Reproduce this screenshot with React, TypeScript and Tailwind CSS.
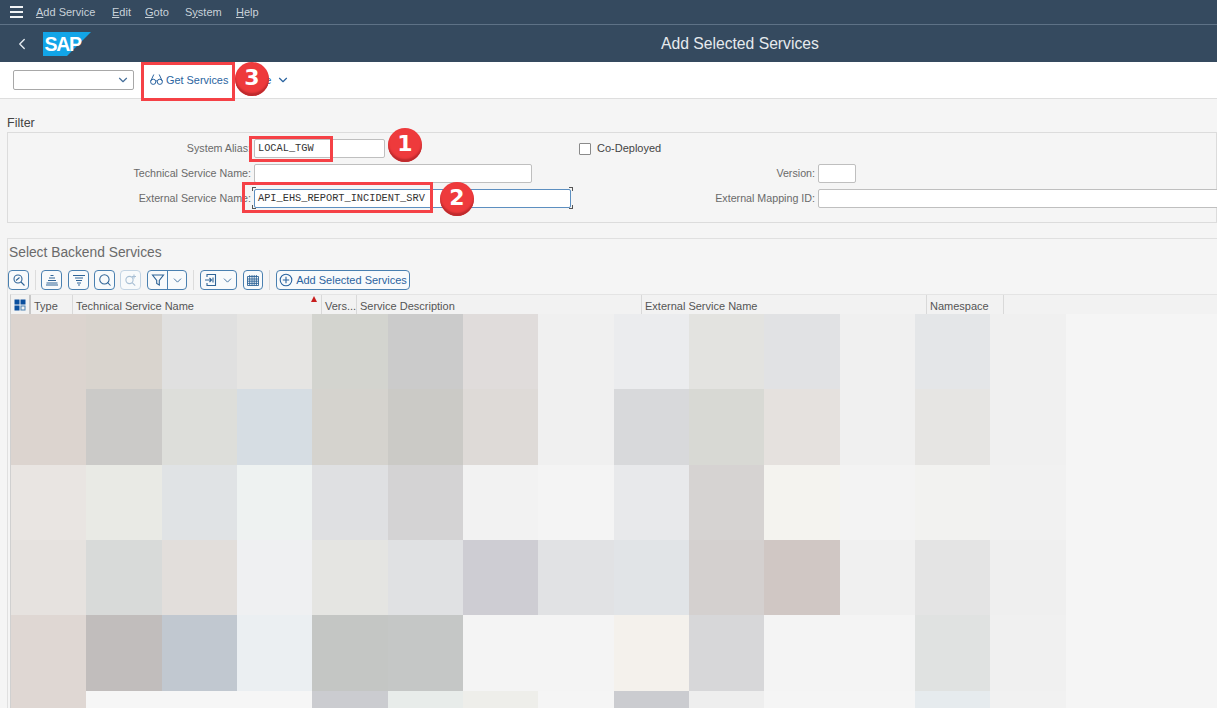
import React from "react";
import { ChevronDown, ChevronLeft, Search } from "lucide-react";

const mosaic = [
  ["#dcd4cf", "#d9d4ce", "#e0e0e0", "#e6e5e3", "#d3d4cf", "#cbcbcb", "#e0dcdb", "#f0f0f0", "#ebecee", "#e3e3e0", "#e1e2e4", "#f0f0f0", "#e4e6e8", "#f0f0f0"],
  ["#dcd4cf", "#cbcac8", "#dddeda", "#d6dde3", "#d5d3ce", "#cbcac6", "#dedad7", "#f0f0f0", "#d8d9db", "#d8d9d4", "#e5e1de", "#f0f0f0", "#e6e5e3", "#f0f0f0"],
  ["#e9e5e2", "#e9eae5", "#e0e3e5", "#eef2f1", "#dfe0e2", "#d4d3d4", "#f2f2f2", "#f4f4f4", "#e8e9eb", "#d6d3d2", "#f4f3ef", "#f3f3f3", "#f2f2f0", "#f1f1f1"],
  ["#e6e2df", "#d8dad9", "#e2dedb", "#eff0f2", "#e5e5e2", "#e0e1e3", "#cecdd3", "#e1e2e4", "#e1e4e7", "#d4d0cf", "#d0c7c4", "#f0f0f0", "#e4e4e4", "#efefef"],
  ["#dfd7d3", "#c1bdbc", "#c1c8d0", "#ebeff2", "#c4c6c4", "#c5c7c6", "#f4f4f4", "#f4f4f4", "#f4f1ec", "#d7d7d9", "#f4f4f4", "#f4f4f4", "#e0e2e1", "#f0f0f0"],
  ["#dfd7d3", "#f6f6f6", "#f6f6f6", "#f6f6f6", "#cbccd0", "#e8ecea", "#eeeeea", "#f5f5f5", "#cbccd0", "#eeeeee", "#f5f5f5", "#f5f5f5", "#e6ebee", "#f1f1f1"],
];

const ICON = "#2f6497";

function Menu({ before = "", u, after }: { before?: string; u: string; after: string }) {
  return (
    <span>
      {before}
      <span className="underline">{u}</span>
      {after}
    </span>
  );
}

function Input({ w, value, focus }: { w: string; value?: string; focus?: boolean }) {
  return (
    <div
      className={`${w} shrink-0 h-[19px] rounded-[2px] bg-white flex items-center pl-[3px] text-[10.3px] leading-none text-[#333] border ${
        focus ? "border-[#5d8fc0]" : "border-[#bfbfbf]"
      }`}
      style={{ fontFamily: '"Liberation Mono", monospace' }}
    >
      {value}
    </div>
  );
}

function Label({ w, children }: { w: string; children: React.ReactNode }) {
  return <div className={`${w} shrink-0 text-right text-[10.7px] text-[#6a6a6a] pr-[3px] whitespace-nowrap`}>{children}</div>;
}

function ToolBtn({ w = "w-[21px]", dim, extra = "", children }: { w?: string; dim?: boolean; extra?: string; children: React.ReactNode }) {
  return (
    <div
      className={`${w} ${extra} h-5 shrink-0 rounded-[4px] border bg-[#f8fafb] flex items-center justify-center ${
        dim ? "border-[#c3d4e3]" : "border-[#4a80b0]"
      }`}
    >
      {children}
    </div>
  );
}

const Sep = ({ extra = "" }: { extra?: string }) => <div className={`${extra} w-px h-5 bg-[#dcdcdc] shrink-0`} />;

function Ic({ color = ICON, children }: { color?: string; children: React.ReactNode }) {
  return (
    <svg width="14" height="14" viewBox="0 0 14 14" fill="none" stroke={color} strokeWidth="1.1">
      {children}
    </svg>
  );
}

function Badge({ n, cls }: { n: string; cls: string }) {
  return (
    <div
      className={`absolute ${cls} w-[34px] h-[34px] rounded-full bg-[#ee3a3c] shadow-[inset_0_-3px_2px_#bd2a2d] flex items-center justify-center text-white text-[22px] font-bold leading-none pb-[2px]`}
      style={{ fontFamily: '"DejaVu Sans", sans-serif' }}
    >
      {n}
    </div>
  );
}

function Head({ w, children }: { w: string; children?: React.ReactNode }) {
  return (
    <div className={`${w} shrink-0 h-full border-r border-[#d9d9d9] pl-[3px] pt-[3px] flex items-center text-[11px] text-[#555] whitespace-nowrap overflow-hidden`}>
      {children}
    </div>
  );
}

export default function App() {
  return (
    <div className="relative w-[1217px] h-[708px] overflow-hidden bg-[#f5f5f5]" style={{ fontFamily: '"Liberation Sans", Arial, sans-serif' }}>
      {/* menu bar */}
      <div className="h-[25px] bg-[#354a5f] border-b border-[#5e7286] flex items-center text-[11px] text-[#c9d2da]">
        <div className="w-9 pl-[10px] flex flex-col gap-[3px]">
          <div className="w-[13px] h-[2px] bg-[#f0f3f5]" />
          <div className="w-[13px] h-[2px] bg-[#f0f3f5]" />
          <div className="w-[13px] h-[2px] bg-[#f0f3f5]" />
        </div>
        <div className="w-[76px]"><Menu u="A" after="dd Service" /></div>
        <div className="w-[33px]"><Menu u="E" after="dit" /></div>
        <div className="w-[40px]"><Menu u="G" after="oto" /></div>
        <div className="w-[51px]"><Menu before="S" u="y" after="stem" /></div>
        <div><Menu u="H" after="elp" /></div>
      </div>
      {/* shell header */}
      <div className="relative h-[37px] bg-[#354a5f] flex items-center">
        <ChevronLeft className="ml-[13px] text-[#e6ecf1]" size={18} strokeWidth={1.8} />
        <svg className="ml-[12px]" width="48" height="24" viewBox="0 0 48 24">
          <polygon points="0,0 48,0 24,24 0,24" fill="#12a5e8" />
          <text x="1.5" y="18.5" fontFamily="Liberation Sans" fontWeight="700" fontSize="19.5" letterSpacing="-1.3" fill="#fff">SAP</text>
        </svg>
        <div className="absolute left-[661px] top-[9px] text-[15.7px] leading-[19px] text-[#e6eaee]">Add Selected Services</div>
      </div>
      {/* toolbar */}
      <div className="h-[37px] bg-white border-b border-[#dedede] flex items-center">
        <div className="ml-[13px] w-[121px] h-5 rounded-[2px] border border-[#a8a8a8] bg-white flex items-center justify-end pr-[3px]">
          <ChevronDown size={14} className="text-[#47709b]" />
        </div>
        <div className="ml-4 flex items-center gap-[3px] text-[10.9px] text-[#2b64a0]">
          <svg width="13" height="13" viewBox="0 0 13 13" fill="none" stroke="#2b64a0" strokeWidth="1">
            <circle cx="3.2" cy="8.8" r="2.6" />
            <circle cx="9.8" cy="8.8" r="2.6" />
            <path d="M0.7 8.2 L3.8 1.5 M12.3 8.2 L9.2 1.5 M5.8 8.2 Q6.5 7.4 7.2 8.2" />
          </svg>
          <span>Get Services</span>
        </div>
        <div className="ml-[18px] flex items-center gap-[5px] text-[11px] text-[#2b64a0]">
          <span>More</span>
          <ChevronDown size={14} />
        </div>
      </div>
      {/* filter */}
      <div className="h-[33px] pl-[7px] pt-[17px] text-[12.5px] leading-[15px] text-[#444]">Filter</div>
      <div className="ml-[7px] h-[91px] border border-[#dcdcdc] pt-[3px]">
        <div className="h-[25px] flex items-center">
          <Label w="w-[246px]">System Alias:</Label>
          <Input w="w-[131px]" value="LOCAL_TGW" />
          <div className="ml-[194px] w-3 h-3 border border-[#8a8a8a] rounded-[1px] bg-white" />
          <span className="ml-[6px] text-[11px] text-[#444]">Co-Deployed</span>
        </div>
        <div className="h-[25px] flex items-center">
          <Label w="w-[246px]">Technical Service Name:</Label>
          <Input w="w-[278px]" />
          <Label w="w-[286px]">Version:</Label>
          <Input w="w-[38px]" />
        </div>
        <div className="h-[25px] flex items-center">
          <Label w="w-[246px]">External Service Name:</Label>
          <Input w="w-[317px]" value="API_EHS_REPORT_INCIDENT_SRV" focus />
          <Label w="w-[247px]">External Mapping ID:</Label>
          <Input w="w-[420px]" />
        </div>
      </div>
      {/* backend services */}
      <div className="mt-[15px] ml-[7px] border-t border-l border-[#e0e0e0]">
        <div className="h-[26px] pl-[1px] pt-[4px] flex items-start text-[13.8px] leading-[20px] text-[#6a6a6a]">Select Backend Services</div>
        <div className="mt-[5px] h-5 flex items-center gap-[5px]">
          <ToolBtn>
            <Ic><circle cx="6" cy="6" r="4" /><path d="M9 9l3.5 3.5M4 7.5l3.5-3" /></Ic>
          </ToolBtn>
          <Sep extra="ml-px" />
          <ToolBtn>
            <Ic><path d="M5.5 2.5h3M4 5h6M3 7.5h8M1.5 10h11M1 12h12" /></Ic>
          </ToolBtn>
          <ToolBtn extra="ml-px">
            <Ic><path d="M1 2.5h12M3 5h8M4 7.5h6M5 10h4M6 12h2" /></Ic>
          </ToolBtn>
          <ToolBtn><Search size={14} color={ICON} strokeWidth={1.8} /></ToolBtn>
          <ToolBtn dim>
            <Ic color="#a9c0d5"><circle cx="5.5" cy="7" r="3.6" /><path d="M8.2 9.7l3 3M10 1.5v4M8 3.5h4" /></Ic>
          </ToolBtn>
          <div className="ml-px w-[40px] h-5 rounded-[4px] border border-[#4a80b0] bg-[#f8fafb] flex shrink-0">
            <div className="w-[20px] border-r border-[#4a80b0] flex items-center justify-center">
              <Ic><path d="M1.5 2h11L8.3 7.5V12L5.7 10.5v-3z" /></Ic>
            </div>
            <div className="flex-1 flex items-center justify-center"><ChevronDown size={13} color={ICON} strokeWidth={1.6} /></div>
          </div>
          <Sep extra="ml-px" />
          <ToolBtn w="w-[37px]" extra="ml-px">
            <Ic><path d="M3 4V1.5h8.5v11H3V10M1 7h6.5M5.5 5l2 2-2 2M9 4.5v5" /></Ic>
            <ChevronDown size={13} color={ICON} strokeWidth={1.6} className="ml-[3px]" />
          </ToolBtn>
          <ToolBtn w="w-[20px]" extra="ml-px">
            <Ic><path d="M1.5 3.5h11v9h-11zM1.5 6h11M1.5 8.2h11M1.5 10.4h11M3.7 2v10.5M6 2v10.5M8.2 2v10.5M10.4 2v10.5" strokeWidth="0.9" /></Ic>
          </ToolBtn>
          <Sep extra="ml-px" />
          <div className="ml-px h-5 w-[134px] rounded-[4px] border border-[#4a80b0] bg-[#f8fafb] flex items-center justify-center gap-[3px] text-[11px] text-[#2b64a0] shrink-0">
            <svg width="14" height="14" viewBox="0 0 14 14" fill="none" stroke="#2b64a0" strokeWidth="1.1"><circle cx="7" cy="7" r="5.8" /><path d="M7 3.8v6.4M3.8 7h6.4" /></svg>
            <span>Add Selected Services</span>
          </div>
        </div>
        <div className="relative mt-1 h-5 ml-[2px] bg-[#f2f2f2] border-l border-[#cfcfcf] border-t border-t-[#e4e4e4] flex items-center">
          <div className="w-[20px] h-full shrink-0 border-r-2 border-[#c8c8c8] flex items-center justify-center">
            <svg width="12" height="12" viewBox="0 0 12 12" fill="#0a4f9e">
              <rect x="0.5" y="0.5" width="5" height="5" />
              <rect x="6.5" y="0.5" width="5" height="5" />
              <rect x="0.5" y="6.5" width="5" height="5" />
              <rect x="7" y="7" width="4" height="4" fill="none" stroke="#4a80b0" />
            </svg>
          </div>
          <Head w="w-[42px]">Type</Head>
          <Head w="w-[249px]">Technical Service Name</Head>
          <Head w="w-[35px]">Vers...</Head>
          <Head w="w-[285px]">Service Description</Head>
          <Head w="w-[285px]">External Service Name</Head>
          <Head w="w-[77px]">Namespace</Head>
          <div className="absolute left-[300px] top-[1px] w-0 h-0 border-l-[3px] border-r-[3px] border-b-[6px] border-l-transparent border-r-transparent border-b-[#c81e1e]" />
        </div>
        <div className="ml-[2px] border-l border-[#d0d0d0] grid grid-cols-[repeat(14,75.33px)] auto-rows-[75.33px]">
          {mosaic.flat().map((c, i) => (
            <div key={i} style={{ backgroundColor: c }} />
          ))}
        </div>
      </div>

      {/* focus corners on the field */}
      <div className="absolute left-[252px] top-[187px] w-[4px] h-[4px] border-l border-t border-[#555]" />
      <div className="absolute left-[569px] top-[187px] w-[4px] h-[4px] border-r border-t border-[#555]" />
      <div className="absolute left-[252px] top-[205px] w-[4px] h-[4px] border-l border-b border-[#555]" />
      <div className="absolute left-[569px] top-[205px] w-[4px] h-[4px] border-r border-b border-[#555]" />

      {/* annotations */}
      <div className="absolute left-[141px] top-[62px] w-[94px] h-[39px] border-[3px] border-[#f54146]" />
      <div className="absolute left-[249px] top-[136px] w-[84px] h-[26px] border-[3px] border-[#f54146]" />
      <div className="absolute left-[242px] top-[182px] w-[191px] h-[31px] border-[3px] border-[#f54146]" />
      <Badge n="1" cls="left-[388px] top-[128px]" />
      <Badge n="2" cls="left-[440px] top-[182px]" />
      <Badge n="3" cls="left-[235px] top-[62px]" />
    </div>
  );
}
